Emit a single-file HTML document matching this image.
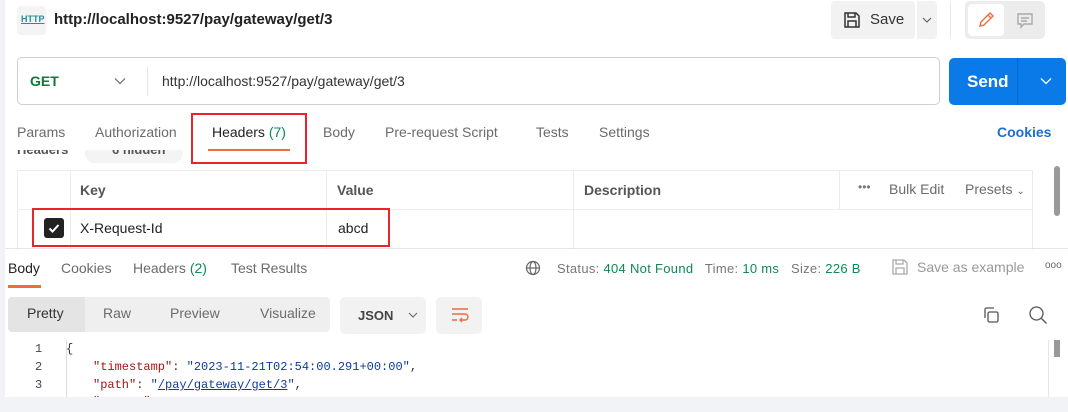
<!DOCTYPE html>
<html><head><meta charset="utf-8"><style>
*{margin:0;padding:0;box-sizing:border-box}
body{width:1068px;height:412px;overflow:hidden;background:#fff;font-family:"Liberation Sans",sans-serif;position:relative;color:#212121}
.a{position:absolute;white-space:nowrap}
.t{font-size:14px;color:#6b6b6b}
</style></head><body>
<div class="a" style="left:0;top:0;width:5px;height:412px;background:#f2f3f7"></div>
<div class="a" style="left:0;top:397px;width:1068px;height:15px;background:#f2f3f7"></div>

<!-- top bar -->
<div class="a" style="left:17px;top:6px;width:29px;height:29px;background:#f4f4f4;border-radius:4px"></div>
<div class="a" style="left:21px;top:14px;font-size:9px;color:#2a8a9a;font-weight:bold;text-decoration:underline">HTTP</div>
<div class="a" style="left:54px;top:11px;font-size:15px;font-weight:bold;color:#222">http://localhost:9527/pay/gateway/get/3</div>

<div class="a" style="left:831px;top:1px;width:84px;height:38px;background:#f2f2f2;border-radius:4px"></div>
<svg class="a" style="left:843px;top:11px" width="18" height="18" viewBox="0 0 18 18" fill="none" stroke="#333" stroke-width="1.5"><path d="M2 2h11l3 3v11H2z"/><path d="M5 2v4h7V2M5 16v-6h8v6"/></svg>
<div class="a" style="left:870px;top:11px;font-size:15px;color:#333">Save</div>
<div class="a" style="left:917px;top:1px;width:20px;height:38px;background:#f2f2f2;border-radius:0 4px 4px 0"></div>
<svg class="a" style="left:922px;top:16px" width="10" height="8"><path d="M1 2l4 4 4-4" stroke="#555" fill="none"/></svg>
<div class="a" style="left:950px;top:2px;width:1px;height:36px;background:#e8e8e8"></div>
<div class="a" style="left:965px;top:1px;width:80px;height:38px;background:#ececec;border-radius:5px"></div>
<div class="a" style="left:968px;top:4px;width:36px;height:32px;background:#fff;border-radius:4px"></div>
<svg class="a" style="left:977px;top:11px" width="18" height="18" viewBox="0 0 18 18" fill="none" stroke="#f26b3a" stroke-width="1.4"><path d="M3 15l1-4 9-9 3 3-9 9z M11 4l3 3"/></svg>
<svg class="a" style="left:1016px;top:11px" width="18" height="18" viewBox="0 0 18 18" fill="none" stroke="#aaa" stroke-width="1.4"><path d="M2 3h14v10H8l-3 3v-3H2z M5 7h8M5 10h6"/></svg>

<!-- url bar -->
<div class="a" style="left:17px;top:57px;width:923px;height:48px;border:1px solid #cfcfcf;border-radius:5px"></div>
<div class="a" style="left:30px;top:73px;font-size:14px;font-weight:bold;color:#0b7a3b">GET</div>
<svg class="a" style="left:114px;top:77px" width="12" height="8"><path d="M1 1.5l5 5 5-5" stroke="#666" fill="none" stroke-width="1.2"/></svg>
<div class="a" style="left:147px;top:66px;width:1px;height:30px;background:#e6e6e6"></div>
<div class="a" style="left:162px;top:73px;font-size:14px;color:#333">http://localhost:9527/pay/gateway/get/3</div>
<div class="a" style="left:949px;top:58px;width:117px;height:47px;background:#0b7ae9;border-radius:5px"></div>
<div class="a" style="left:1017px;top:58px;width:1px;height:47px;background:#0a68c4"></div>
<div class="a" style="left:967px;top:72px;font-size:17px;font-weight:bold;color:#fff">Send</div>
<svg class="a" style="left:1040px;top:77px" width="12" height="8"><path d="M1 1.5l5 5 5-5" stroke="#fff" fill="none" stroke-width="1.3"/></svg>

<!-- tabs -->
<div class="a t" style="left:17px;top:124px">Params</div>
<div class="a t" style="left:95px;top:124px">Authorization</div>
<div class="a" style="left:212px;top:124px;font-size:14px;color:#222">Headers <span style="color:#0b8a55">(7)</span></div>
<div class="a t" style="left:323px;top:124px">Body</div>
<div class="a t" style="left:385px;top:124px">Pre-request Script</div>
<div class="a t" style="left:536px;top:124px">Tests</div>
<div class="a t" style="left:599px;top:124px">Settings</div>
<div class="a" style="left:997px;top:124px;font-size:14px;font-weight:bold;color:#1a6fd1">Cookies</div>
<div class="a" style="left:208px;top:149px;width:82px;height:2px;background:#f26b3a"></div>
<div class="a" style="left:17px;top:150px;width:180px;height:14px;overflow:hidden">
  <div class="a" style="left:0;top:-8px;font-size:13px;font-weight:bold;color:#555">Headers</div>
  <div class="a" style="left:68px;top:-7px;width:98px;height:20px;background:#f4f4f4;border-radius:10px"></div>
  <div class="a" style="left:95px;top:-8px;font-size:13px;font-weight:bold;color:#555">6 hidden</div>
</div>
<div class="a" style="left:191px;top:113px;width:116px;height:51px;border:2px solid #e8242c"></div>

<!-- table -->
<div class="a" style="left:17px;top:170px;width:1016px;height:80px;border:1px solid #ececec;border-bottom:none"></div>
<div class="a" style="left:17px;top:209px;width:1016px;height:1px;background:#ececec"></div>
<div class="a" style="left:70px;top:170px;width:1px;height:80px;background:#ececec"></div>
<div class="a" style="left:326px;top:170px;width:1px;height:80px;background:#ececec"></div>
<div class="a" style="left:573px;top:170px;width:1px;height:80px;background:#ececec"></div>
<div class="a" style="left:839px;top:170px;width:1px;height:40px;background:#ececec"></div>
<div class="a" style="left:80px;top:182px;font-size:14px;font-weight:bold;color:#555">Key</div>
<div class="a" style="left:337px;top:182px;font-size:14px;font-weight:bold;color:#555">Value</div>
<div class="a" style="left:584px;top:182px;font-size:14px;font-weight:bold;color:#555">Description</div>
<div class="a" style="left:858px;top:180px;font-size:12px;color:#777">•••</div>
<div class="a t" style="left:889px;top:181px">Bulk Edit</div>
<div class="a t" style="left:965px;top:181px">Presets <span style="font-size:10px">⌄</span></div>
<div class="a" style="left:44px;top:218px;width:20px;height:20px;background:#222;border-radius:3px"></div>
<svg class="a" style="left:47px;top:221px" width="14" height="14"><path d="M2.5 7.5l3 3 6-6.5" stroke="#fff" stroke-width="2" fill="none"/></svg>
<div class="a" style="left:80px;top:220px;font-size:14px;color:#222">X-Request-Id</div>
<div class="a" style="left:338px;top:220px;font-size:14px;color:#222">abcd</div>
<div class="a" style="left:32px;top:208px;width:358px;height:39px;border:2px solid #e8242c"></div>
<div class="a" style="left:1054px;top:166px;width:6px;height:50px;background:#999;border-radius:3px"></div>

<!-- response -->
<div class="a" style="left:5px;top:248px;width:1063px;height:1px;background:#e6e6e6"></div>
<div class="a" style="left:8px;top:260px;font-size:14px;color:#222">Body</div>
<div class="a t" style="left:61px;top:260px">Cookies</div>
<div class="a t" style="left:133px;top:260px">Headers <span style="color:#0b8a55">(2)</span></div>
<div class="a t" style="left:231px;top:260px">Test Results</div>
<div class="a" style="left:8px;top:285px;width:33px;height:3px;background:#f26b3a"></div>
<svg class="a" style="left:525px;top:260px" width="16" height="16" viewBox="0 0 16 16" fill="none" stroke="#666" stroke-width="1.2"><circle cx="8" cy="8" r="6.5"/><ellipse cx="8" cy="8" rx="3" ry="6.5"/><path d="M1.5 8h13"/></svg>
<div class="a" style="left:557px;top:261px;font-size:13px;color:#777;letter-spacing:0.3px">Status: <span style="color:#0b8a55">404 Not Found</span> &nbsp; Time: <span style="color:#0b8a55">10 ms</span> &nbsp; Size: <span style="color:#0b8a55">226 B</span></div>
<svg class="a" style="left:891px;top:258px" width="18" height="18" viewBox="0 0 18 18" fill="none" stroke="#aaa" stroke-width="1.3"><path d="M2 2h11l3 3v11H2z"/><path d="M5 2v4h7V2M5 16v-6h8v6"/></svg>
<div class="a" style="left:917px;top:259px;font-size:14px;color:#999">Save as example</div>
<div class="a" style="left:1045px;top:260px;font-size:10px;color:#666">ooo</div>

<div class="a" style="left:8px;top:297px;width:322px;height:35px;background:#efefef;border-radius:4px"></div>
<div class="a" style="left:8px;top:297px;width:77px;height:35px;background:#e4e4e4;border-radius:4px 0 0 4px"></div>
<div class="a" style="left:27px;top:305px;font-size:14px;color:#333">Pretty</div>
<div class="a t" style="left:103px;top:305px">Raw</div>
<div class="a t" style="left:170px;top:305px">Preview</div>
<div class="a t" style="left:260px;top:305px">Visualize</div>
<div class="a" style="left:340px;top:297px;width:86px;height:37px;background:#f2f2f2;border-radius:5px"></div>
<div class="a" style="left:358px;top:308px;font-size:13px;font-weight:bold;color:#444">JSON</div>
<svg class="a" style="left:408px;top:312px" width="10" height="7"><path d="M1 1l4 4 4-4" stroke="#666" fill="none"/></svg>
<div class="a" style="left:436px;top:297px;width:46px;height:37px;background:#f2f2f2;border-radius:5px"></div>
<svg class="a" style="left:451px;top:307px" width="18" height="16" viewBox="0 0 18 16" fill="none" stroke="#f26b3a" stroke-width="1.4"><path d="M1 2h16M1 7h13a3 3 0 010 6H9M11 11l-2 2 2 2M1 13h5"/></svg>
<svg class="a" style="left:982px;top:306px" width="18" height="18" viewBox="0 0 18 18" fill="none" stroke="#555" stroke-width="1.3"><rect x="6" y="6" width="10" height="10" rx="1.5"/><path d="M3 12V3.5A1.5 1.5 0 014.5 2H12"/></svg>
<svg class="a" style="left:1028px;top:305px" width="20" height="20" viewBox="0 0 20 20" fill="none" stroke="#555" stroke-width="1.3"><circle cx="8.5" cy="8.5" r="6.5"/><path d="M13.5 13.5l5 5"/></svg>

<div class="a" style="left:66px;top:340px;width:1px;height:57px;background:#ddd"></div>
<div style="position:absolute;left:0;top:340px;width:1050px;height:57px;overflow:hidden;font-family:'Liberation Mono',monospace;font-size:12px">
 <div class="a" style="left:35px;top:2px;color:#445">1</div>
 <div class="a" style="left:35px;top:20px;color:#445">2</div>
 <div class="a" style="left:35px;top:38px;color:#445">3</div>
 <div class="a" style="left:35px;top:55px;color:#445">4</div>
 <div class="a" style="left:66px;top:2px;color:#333">{</div>
 <div class="a" style="left:93px;top:20px;color:#333"><span style="color:#a31515">"timestamp"</span>: <span style="color:#0c3aa1">"2023-11-21T02:54:00.291+00:00"</span>,</div>
 <div class="a" style="left:93px;top:38px;color:#333"><span style="color:#a31515">"path"</span>: <span style="color:#0c3aa1">"<u>/pay/gateway/get/3</u>"</span>,</div>
 <div class="a" style="left:93px;top:55px;color:#333"><span style="color:#a31515">"status"</span>: <span style="color:#0b8a55">404</span>,</div>
</div>
<div class="a" style="left:1054px;top:340px;width:6px;height:17px;background:#999"></div>
<div class="a" style="left:1048px;top:340px;width:1px;height:57px;background:#e6e6e6"></div>
</body></html>
